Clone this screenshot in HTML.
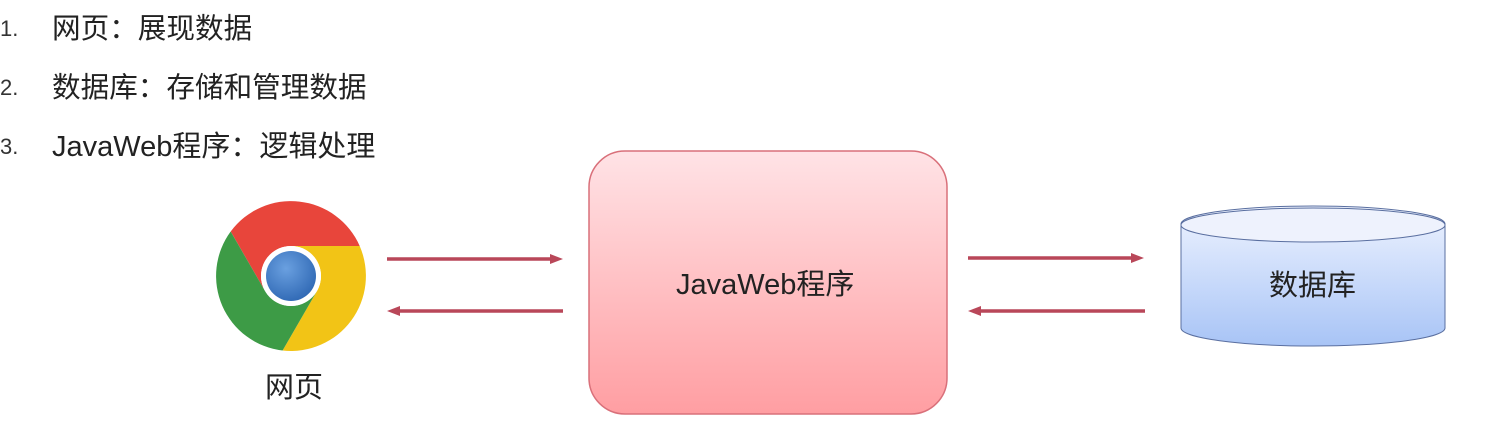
<!DOCTYPE html>
<html><head><meta charset="utf-8"><style>
body{margin:0;width:1497px;height:442px;background:#fff;position:relative;overflow:hidden;font-family:"Liberation Sans","Noto Sans CJK SC",sans-serif;color:#222}
.l{position:absolute;font-size:28.6px;line-height:32px;white-space:nowrap}
.n{position:absolute;font-size:22px;line-height:30px;color:#333}
</style></head><body>
<div class="n" style="left:0;top:14px">1.</div><div class="l" style="left:52px;top:13px">网页：展现数据</div>
<div class="n" style="left:0;top:73px">2.</div><div class="l" style="left:52px;top:72px">数据库：存储和管理数据</div>
<div class="n" style="left:0;top:132px">3.</div><div class="l" style="left:52px;top:131px;font-size:29px">JavaWeb程序：逻辑处理</div>
<svg width="1497" height="442" style="position:absolute;left:0;top:0">
<defs>
<linearGradient id="pk" x1="0" y1="0" x2="0" y2="1"><stop offset="0" stop-color="#ffe3e6"/><stop offset="1" stop-color="#ff9ea2"/></linearGradient>
<linearGradient id="bl" x1="0" y1="0" x2="0" y2="1"><stop offset="0" stop-color="#eef3ff"/><stop offset="1" stop-color="#a8c4f6"/></linearGradient>
<radialGradient id="bc" cx="0.4" cy="0.35" r="0.7"><stop offset="0" stop-color="#6aa0e0"/><stop offset="1" stop-color="#2f68b4"/></radialGradient>
</defs>
<g transform="translate(291,276)">
<path d="M0 -30 L68.7 -30 A75 75 0 0 0 -60.3 -44.5 L-26 15 A30 30 0 0 1 0 -30Z" fill="#e8453b"/>
<path d="M0 -30 L68.7 -30 A75 75 0 0 0 -60.3 -44.5 L-26 15 A30 30 0 0 1 0 -30Z" fill="#f2c416" transform="rotate(120)"/>
<path d="M0 -30 L68.7 -30 A75 75 0 0 0 -60.3 -44.5 L-26 15 A30 30 0 0 1 0 -30Z" fill="#3d9b46" transform="rotate(240)"/>
<circle r="30" fill="#fff"/><circle r="25" fill="url(#bc)"/>
</g>
<rect x="589" y="151" width="358" height="263" rx="36" fill="url(#pk)" stroke="#d9707a" stroke-width="1.5"/>
<g stroke="#b94759" stroke-width="3.5" fill="#b94759">
<line x1="387" y1="259" x2="552" y2="259"/><path d="M550 254 L563 259 L550 264Z" stroke="none"/>
<line x1="400" y1="311" x2="563" y2="311"/><path d="M400 306 L387 311 L400 316Z" stroke="none"/>
<line x1="968" y1="258" x2="1133" y2="258"/><path d="M1131 253 L1144 258 L1131 263Z" stroke="none"/>
<line x1="981" y1="311" x2="1145" y2="311"/><path d="M981 306 L968 311 L981 316Z" stroke="none"/>
</g>
<path d="M1181 224 L1181 328 A132 18 0 0 0 1445 328 L1445 224 A132 18 0 0 0 1181 224Z" fill="url(#bl)" stroke="#5a6fa0" stroke-width="1"/>
<ellipse cx="1313" cy="225" rx="132" ry="17" fill="#eef2fd" stroke="#5a6fa0" stroke-width="1"/>
</svg>
<div class="l" style="left:676px;top:269px;font-size:29px">JavaWeb程序</div>
<div class="l" style="left:1269px;top:270px;font-size:29px">数据库</div>
<div class="l" style="left:265px;top:372px;font-size:29px">网页</div>
</body></html>
